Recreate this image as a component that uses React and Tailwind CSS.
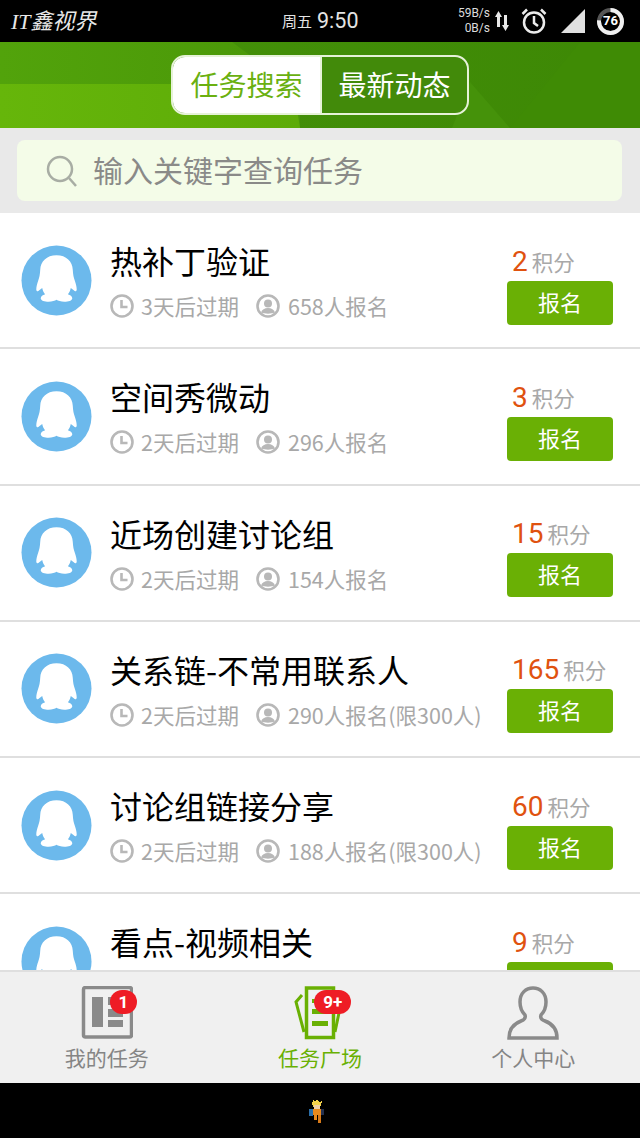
import React from "react";

const font = { fontFamily: '"Noto Sans CJK SC", "Noto Sans", sans-serif' };

const tasks = [
  { title: "热补丁验证", days: "3天后过期", people: "658人报名", points: 2 },
  { title: "空间秀微动", days: "2天后过期", people: "296人报名", points: 3 },
  { title: "近场创建讨论组", days: "2天后过期", people: "154人报名", points: 15 },
  { title: "关系链-不常用联系人", days: "2天后过期", people: "290人报名(限300人)", points: 165 },
  { title: "讨论组链接分享", days: "2天后过期", people: "188人报名(限300人)", points: 60 },
  { title: "看点-视频相关", points: 9, partial: true },
];

function Penguin() {
  return (
    <svg viewBox="0 0 72 72" className="w-[71px] h-[71px] shrink-0">
      <circle cx="36" cy="36" r="35.5" fill="#6cb9ec" />
      <path
        d="M36 10.500C26 10.500 19.800 17 19.500 25C19.300 30 18.500 33 17.500 36C16.500 39 15.500 42 15.500 45C15.500 47 17 47.500 18.500 46L21.500 43.500C22 46 23 48 24.500 50C22 51 20 52 20 54C20 56.500 24 57.500 28 57.500C31.500 57.500 34.500 56.500 36 55.500C37.500 56.500 40.500 57.500 44 57.500C48 57.500 52 56.500 52 54C52 52 50 51 47.500 50C49 48 50 46 50.500 43.500L53.500 46C55 47.500 56.500 47 56.500 45C56.500 42 55.500 39 54.500 36C53.500 33 52.700 30 52.500 25C52.200 17 46 10.500 36 10.500z"
        fill="#fff"
      />
    </svg>
  );
}

function Clock() {
  return (
    <svg viewBox="0 0 24 24" className="w-6 h-6 shrink-0" fill="none" stroke="#b8b8b8" strokeWidth="2.600">
      <circle cx="12" cy="12" r="10.500" />
      <path d="M11.500 6v7h6" />
    </svg>
  );
}

function Person() {
  return (
    <svg viewBox="0 0 24 24" className="w-6 h-6 shrink-0">
      <circle cx="12" cy="12" r="10.500" fill="none" stroke="#b8b8b8" strokeWidth="2.600" />
      <circle cx="12" cy="9.500" r="4" fill="#b8b8b8" />
      <path d="M5 18.500c1-3 3.500-4.500 7-4.500s6 1.500 7 4.500c-4 1.500-10 1.500-14 0z" fill="#b8b8b8" />
    </svg>
  );
}

function TaskRow({ task }) {
  return (
    <div className="h-[136.250px] shrink-0 bg-white border-b-2 border-[#dfdfdf] flex items-center pl-[21px] pr-[27px]">
      <Penguin />
      <div className="ml-[18px] flex-1 min-w-0">
        <div className="text-[32px] leading-[44px] text-black whitespace-nowrap">{task.title}</div>
        <div className="mt-[8px] h-[32px] flex items-center text-[21.5px] leading-[32px] text-[#a8a8a8] whitespace-nowrap">
          {!task.partial && (
            <>
              <Clock />
              <span className="ml-[7px] w-[115px]">{task.days}</span>
              <Person />
              <span className="ml-[8px]">{task.people}</span>
            </>
          )}
        </div>
      </div>
      <div className="w-[106px] shrink-0 flex flex-col items-start mt-[7px]">
        <div className="ml-[5px] flex items-baseline h-[38px] leading-[38px] whitespace-nowrap">
          <span className="text-[28px] text-[#e0520f]" style={{ fontFamily: "Roboto, sans-serif" }}>{task.points}</span>
          <span className="ml-[4px] text-[21.5px] text-[#a8a8a8]">积分</span>
        </div>
        <div className="w-[106px] h-[44px] rounded-[4px] bg-[#6ab005] text-white text-[22px] leading-[41px] text-center">
          {!task.partial && "报名"}
        </div>
      </div>
    </div>
  );
}

function StatusBar() {
  return (
    <div className="h-[42px] bg-black text-white flex items-center relative shrink-0">
      <span className="ml-[11px] text-[22px] italic text-[#e8e8e8]" style={{ fontFamily: '"Liberation Serif", "Noto Sans CJK SC", serif' }}>IT鑫视界</span>
      <div className="absolute left-[282px] top-0 h-[42px] flex items-center text-[#e4e4e4]">
        <span className="text-[15px]">周五</span>
        <span className="ml-[5px] text-[21.5px]" style={{ fontFamily: "Roboto, sans-serif" }}>9:50</span>
      </div>
      <div className="absolute right-[16px] top-0 h-[42px] flex items-center">
        <div className="text-[12px] leading-[15px] text-right text-[#dcdcdc]" style={{ fontFamily: "Roboto, sans-serif" }}>
          <div>59B/s</div>
          <div>0B/s</div>
        </div>
        <svg viewBox="0 0 16 22" className="ml-[4px] w-[16px] h-[22px]" fill="#e8e8e8">
          <path d="M4.500 1l3.500 6H6v10H3V7H1zM11.500 21L8 15h2V5h3v10h2z" />
        </svg>
        <svg viewBox="0 0 26 28" className="ml-[11px] w-[26px] h-[28px]" fill="none" stroke="#ececec" strokeWidth="2.500">
          <circle cx="13" cy="15.500" r="10" />
          <path d="M13 9v7l4 3M1.500 7L6 2.500M24.500 7L20 2.500" />
        </svg>
        <svg viewBox="0 0 26 26" className="ml-[13px] w-[26px] h-[26px]">
          <path d="M25 1v24H1z" fill="#e0e0e0" />
        </svg>
        <div className="ml-[11px] relative w-[27px] h-[27px]">
          <svg viewBox="0 0 27 27" className="w-[27px] h-[27px]" fill="none" strokeWidth="4">
            <circle cx="13.500" cy="13.500" r="11.500" stroke="#555555" />
            <circle cx="13.500" cy="13.500" r="11.500" stroke="#f0f0f0" strokeDasharray="55 72.300" transform="rotate(-90 13.500 13.500)" />
          </svg>
          <span className="absolute inset-0 flex items-center justify-center text-[13px] font-bold" style={{ fontFamily: "Roboto, sans-serif" }}>76</span>
        </div>
      </div>
    </div>
  );
}

function Header() {
  return (
    <div className="h-[86px] relative shrink-0 flex justify-center items-start pt-[13px] bg-[#448f07] overflow-hidden">
      <svg viewBox="0 0 640 86" preserveAspectRatio="none" className="absolute inset-0 w-full h-full">
        <defs>
          <linearGradient id="topLeftFill" x1="0" y1="0" x2="1" y2="0">
            <stop offset="0" stopColor="#52a30b" />
            <stop offset="1" stopColor="#4a9708" />
          </linearGradient>
          <linearGradient id="lowLeftFill" x1="0" y1="0" x2="1" y2="0">
            <stop offset="0" stopColor="#66b60a" />
            <stop offset="1" stopColor="#5dab08" />
          </linearGradient>
          <linearGradient id="rightFill" x1="0" y1="0" x2="1" y2="0">
            <stop offset="0" stopColor="#46930a" />
            <stop offset="1" stopColor="#3d8805" />
          </linearGradient>
        </defs>
        <rect width="640" height="86" fill="url(#rightFill)" />
        <path d="M0 0H232L300 50V86H0z" fill="url(#topLeftFill)" />
        <path d="M0 42H170L296 60L300 86H0z" fill="url(#lowLeftFill)" />
        <path d="M580 0H640V86H510z" fill="#3f8b05" />
        <path d="M470 40L510 86H452z" fill="#45920a" />
      </svg>
      <div className="relative flex w-[298px] h-[60px] rounded-[14px] border-2 border-[#e6f2d8] bg-[#428a0a] overflow-hidden">
        <div className="w-[147px] h-full bg-white text-[#6ab010] text-[28px] leading-[55px] text-center">任务搜索</div>
        <div className="flex-1 border-l-2 border-[#e6f2d8] text-white text-[28px] leading-[55px] text-center">最新动态</div>
      </div>
    </div>
  );
}

function SearchBar() {
  return (
    <div className="h-[85px] shrink-0 bg-[#e9e9e9] px-[17px] pt-[12px]">
      <div className="h-[61px] w-[605px] rounded-[8px] bg-[#f4fce8] flex items-center pl-[29px]">
        <svg viewBox="0 0 32 32" className="w-[32px] h-[32px]" fill="none" stroke="#a8ada4" strokeWidth="2.500">
          <circle cx="14" cy="14" r="12" />
          <path d="M23 23l7 8" />
        </svg>
        <span className="ml-[15px] -mt-[2px] text-[30px] text-[#8a8a88] whitespace-nowrap">输入关键字查询任务</span>
      </div>
    </div>
  );
}

function Badge({ children, className }) {
  return (
    <span className={`absolute top-[18px] h-[24px] rounded-full bg-[#ee1c25] text-white text-[17px] font-bold leading-[24px] text-center ${className}`} style={{ fontFamily: "Roboto, sans-serif" }}>
      {children}
    </span>
  );
}

function TabBar() {
  return (
    <div className="h-[113px] shrink-0 bg-[#f0f0f0] border-t-2 border-[#dfdfdf] flex">
      <div className="relative flex-1 flex flex-col items-center pt-[14px]">
        <svg viewBox="0 0 52 54" className="w-[52px] h-[54px]">
          <rect x="2.500" y="1.500" width="48" height="49.500" rx="2" fill="none" stroke="#8a8a8a" strokeWidth="3.500" />
          <rect x="11" y="11" width="11" height="30" fill="#8a8a8a" />
          <rect x="27" y="11" width="15" height="8" fill="#8a8a8a" />
          <rect x="27" y="23" width="15" height="8" fill="#8a8a8a" />
          <rect x="27" y="34" width="15" height="7" fill="#8a8a8a" />
        </svg>
        <Badge className="left-[110px] w-[27px]">1</Badge>
        <span className="mt-[1px] text-[21px] leading-[32px] text-[#858585]">我的任务</span>
      </div>
      <div className="relative flex-1 flex flex-col items-center pt-[14px]">
        <svg viewBox="0 0 52 54" className="w-[52px] h-[54px]" fill="none" stroke="#69b003">
          <rect x="12.500" y="2" width="27" height="49.500" strokeWidth="3.500" />
          <path d="M8 9L2 16l8 30M46 22l-5 24" strokeWidth="3" />
          <rect x="18" y="13" width="16" height="4" fill="#69b003" stroke="none" />
          <rect x="18" y="23" width="16" height="5" fill="#69b003" stroke="none" />
          <rect x="18" y="35" width="16" height="5" fill="#69b003" stroke="none" />
        </svg>
        <Badge className="left-[101px] w-[37px]">9+</Badge>
        <span className="mt-[1px] text-[21px] leading-[32px] text-[#69b003]">任务广场</span>
      </div>
      <div className="relative flex-1 flex flex-col items-center pt-[14px]">
        <svg viewBox="0 0 52 54" className="w-[52px] h-[54px]" fill="none" stroke="#8a8a8a" strokeWidth="3.500">
          <path d="M2 52c0-9 4-14 12-17 3-1 5-3 4-6-3-3-5-8-5-13C13 7 19 2 26 2s13 5 13 14c0 5-2 10-5 13-1 3 1 5 4 6 8 3 12 8 12 17z" />
        </svg>
        <span className="mt-[1px] text-[21px] leading-[32px] text-[#858585]">个人中心</span>
      </div>
    </div>
  );
}

function NavBar() {
  return (
    <div className="flex-1 bg-black flex justify-center pt-[14px]">
      {/* Small pixel-art mascot in the navigation strip */}
      <svg viewBox="0 0 20 28" className="w-[20px] h-[28px] -ml-[6px]" shapeRendering="crispEdges">
        <path d="M6 3l2 2 2-3 2 3 3-1-1 4-1 3H7L5 7z" fill="#f4d24a" />
        <rect x="7" y="8" width="6" height="4" fill="#f0d0a8" />
        <rect x="2" y="12" width="4" height="7" fill="#2b6ea8" />
        <rect x="6" y="12" width="8" height="6" fill="#e88a1c" />
        <rect x="14" y="12" width="3" height="6" fill="#24304f" />
        <rect x="7" y="18" width="3" height="5" fill="#e88a1c" />
        <rect x="11" y="18" width="3" height="8" fill="#d87a18" />
      </svg>
    </div>
  );
}

export default function App() {
  return (
    <div className="w-[640px] h-[1138px] flex flex-col overflow-hidden bg-black" style={font}>
      <StatusBar />
      <Header />
      <SearchBar />
      <div className="h-[757px] shrink-0 bg-white overflow-hidden flex flex-col">
        {tasks.map((task) => (
          <TaskRow key={task.title} task={task} />
        ))}
      </div>
      <TabBar />
      <NavBar />
    </div>
  );
}
